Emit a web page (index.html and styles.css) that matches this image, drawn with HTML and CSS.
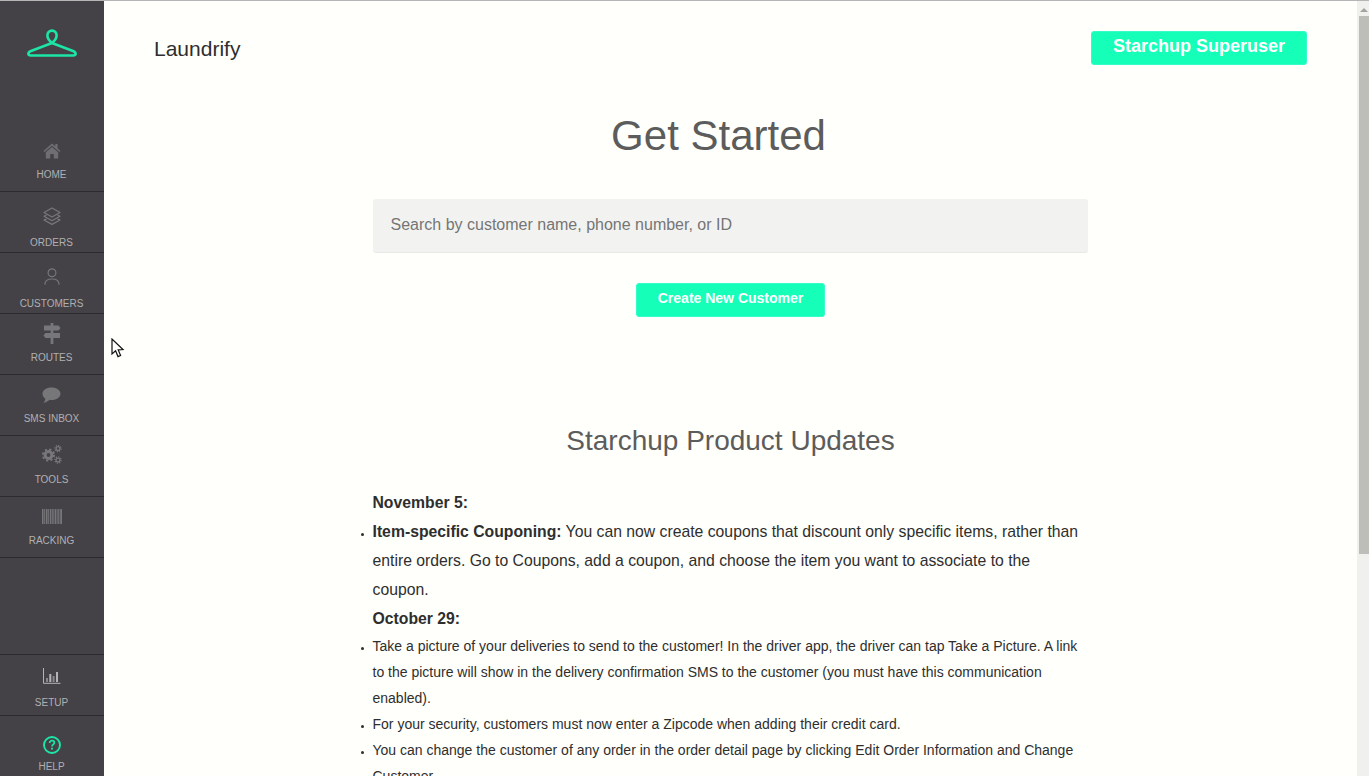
FILE: index.html

```html
<!DOCTYPE html>
<html lang="en">
<head>
  <meta charset="UTF-8" />
  <title>Laundrify</title>
  <link rel="stylesheet" href="styles.css">
</head>
<body>
  <div class="topline"></div>
  <div class="app">
    <nav class="sidebar">
      <div class="logo">
        <svg width="52" height="32" viewBox="0 0 52 32" fill="none" stroke="#1ce6a6" stroke-width="2.6" stroke-linejoin="round" stroke-linecap="round">
          <path d="M26 15 C23 12.5 21.4 10 21.4 7.5 C21.4 4.5 23.4 2.6 26 2.6 C28.6 2.6 30.6 4.5 30.6 7.5 C30.6 10 29 12.5 26 15 Z"/>
          <path d="M26 15 L5 23 C1.5 24.5 1.5 27.5 5 27.5 L47 27.5 C50.5 27.5 50.5 24.5 47 23 Z"/>
        </svg>
      </div>
      <a class="nav-item home">
        <svg class="icon" width="18" height="16" viewBox="0 0 18 16" fill="#6f6f72"><path d="M9 0.5 L0.5 8 L1.5 9 L9 2.7 L16.5 9 L17.5 8 L14.5 5.3 L14.5 1 L12.3 1 L12.3 3.3 Z"/><path d="M9 4 L2.8 9.2 L2.8 15.5 L7.2 15.5 L7.2 11 L10.8 11 L10.8 15.5 L15.2 15.5 L15.2 9.2 Z"/></svg>
        <span>HOME</span>
      </a>
      <a class="nav-item orders">
        <svg class="icon" width="18" height="18" viewBox="0 0 18 18" fill="none" stroke="#77777a" stroke-width="1.3" stroke-linejoin="round"><path d="M9 1 L17 5.5 L9 10 L1 5.5 Z"/><path d="M3.5 8 L1 9.3 L9 13.8 L17 9.3 L14.5 8"/><path d="M3.5 11.8 L1 13 L9 17.4 L17 13 L14.5 11.8"/></svg>
        <span>ORDERS</span>
      </a>
      <a class="nav-item customers">
        <svg class="icon" width="16" height="17" viewBox="0 0 16 17" fill="none" stroke="#77777a" stroke-width="1.2" stroke-linecap="round"><circle cx="8" cy="4.8" r="3.9"/><path d="M1 16.2 C1 12.2 4.5 11 8 11 C11.5 11 15 12.2 15 16.2"/></svg>
        <span>CUSTOMERS</span>
      </a>
      <a class="nav-item routes">
        <svg class="icon" width="18" height="21" viewBox="0 0 18 21" fill="#77777a"><rect x="7.6" y="0" width="2.8" height="21"/><path d="M1 2.5 L15.5 2.5 L17.5 5 L15.5 7.5 L1 7.5 Z"/><path d="M17 10 L2.5 10 L0.5 12.5 L2.5 15 L17 15 Z"/></svg>
        <span>ROUTES</span>
      </a>
      <a class="nav-item sms">
        <svg class="icon" width="19" height="17" viewBox="0 0 19 17" fill="#77777a"><path d="M9.5 0.5 C14.5 0.5 18.5 3.2 18.5 6.7 C18.5 10.2 14.5 13 9.5 13 C8.7 13 8 12.9 7.3 12.8 C5.8 14.5 3.8 15.6 1.5 16.2 C2.5 14.8 3.2 13.3 3.3 11.6 C1.6 10.4 0.5 8.7 0.5 6.7 C0.5 3.2 4.5 0.5 9.5 0.5 Z"/></svg>
        <span>SMS INBOX</span>
      </a>
      <a class="nav-item tools">
        <svg class="icon" width="20" height="19" viewBox="0 0 20 19" fill="none" stroke="#77777a"><circle cx="6.5" cy="10" r="3.4" stroke-width="3"/><circle cx="6.5" cy="10" r="5.6" stroke-width="2" stroke-dasharray="2.2 2.2"/><circle cx="16" cy="3.6" r="1.9" stroke-width="1.3"/><circle cx="16" cy="3.6" r="3.1" stroke-width="1.2" stroke-dasharray="1.2 1.2"/><circle cx="16" cy="15" r="1.9" stroke-width="1.3"/><circle cx="16" cy="15" r="3.1" stroke-width="1.2" stroke-dasharray="1.2 1.2"/></svg>
        <span>TOOLS</span>
      </a>
      <a class="nav-item racking">
        <svg class="icon" width="20" height="15" viewBox="0 0 20 15" fill="#77777a"><rect x="0" width="1.5" height="15"/><rect x="2.2" width="1" height="15"/><rect x="4" width="1.5" height="15"/><rect x="6.2" width="1" height="15"/><rect x="8" width="1" height="15"/><rect x="9.6" width="1.2" height="15"/><rect x="11.4" width="1" height="15"/><rect x="13" width="1" height="15"/><rect x="14.6" width="1" height="15"/><rect x="16.2" width="1.2" height="15"/><rect x="18.2" width="1.8" height="15"/></svg>
        <span>RACKING</span>
      </a>
      <div class="sidebar-bottom">
        <a class="nav-item setup">
          <svg class="icon" width="18" height="16" viewBox="0 0 18 16" fill="#8a8a8c"><path d="M0.5 0 V15.3 H17.5" fill="none" stroke="#b4b4b6" stroke-width="1"/><rect x="3" y="10" width="2" height="4" fill="#88888a"/><rect x="6.3" y="6" width="2" height="8" fill="#b4b4b6"/><rect x="9.6" y="8" width="2" height="6" fill="#88888a"/><rect x="13" y="4" width="2" height="10" fill="#b4b4b6"/></svg>
          <span>SETUP</span>
        </a>
        <a class="nav-item help">
          <svg class="icon" width="18" height="18" viewBox="0 0 18 18" fill="none" stroke="#1ce6a6" stroke-width="1.9"><circle cx="9" cy="9" r="8"/><path d="M6.6 7 C6.6 5.5 7.7 4.7 9 4.7 C10.4 4.7 11.4 5.5 11.4 6.8 C11.4 8.4 9 8.6 9 10.6" stroke-width="1.7"/><path d="M9 11.8 V13.6" stroke-width="1.9"/></svg>
          <span>HELP</span>
        </a>
      </div>
    </nav>

    <main class="main">
      <header class="topbar">
        <div class="brand">Laundrify</div>
        <button class="btn btn-user">Starchup Superuser</button>
      </header>
      <h1 class="title">Get Started</h1>
      <section class="content">
        <input class="search" type="text" placeholder="Search by customer name, phone number, or ID">
        <div class="create-row"><button class="btn btn-create">Create New Customer</button></div>
        <h2 class="updates-title">Starchup Product Updates</h2>
        <div class="updates">
          <p class="date">November 5:</p>
          <ul class="large">
            <li><b>Item-specific Couponing:</b> You can now create coupons that discount only specific items, rather than entire orders. Go to Coupons, add a coupon, and choose the item you want to associate to the coupon.</li>
          </ul>
          <p class="date">October 29:</p>
          <ul>
            <li>Take a picture of your deliveries to send to the customer! In the driver app, the driver can tap Take a Picture. A link to the picture will show in the delivery confirmation SMS to the customer (you must have this communication enabled).</li>
            <li>For your security, customers must now enter a Zipcode when adding their credit card.</li>
            <li>You can change the customer of any order in the order detail page by clicking Edit Order Information and Change Customer.</li>
          </ul>
        </div>
      </section>
    </main>

    <div class="scrollbar">
      <div class="scroll-up"></div>
      <div class="scroll-thumb"></div>
    </div>
  </div>

  <svg class="cursor" width="14" height="21" viewBox="0 0 14 21"><path d="M1 1 L1 16 L4.6 12.8 L7 18.6 L9.6 17.5 L7.2 11.9 L12 11.6 Z" fill="#fff" stroke="#111" stroke-width="1.2" stroke-linejoin="miter"/></svg>
</body>
</html>
```

FILE: styles.css

```css
html, body {
  margin: 0;
  height: 100%;
  overflow: hidden;
}

body {
  font-family: "Liberation Sans", Arial, sans-serif;
  background-color: #fffffb;
  color: #2e2e2e;
}

.topline {
  height: 1px;
  background: #b5b5b5;
}

.app {
  display: flex;
  height: 775px;
}

/* sidebar */
.sidebar {
  width: 104px;
  flex: none;
  background: #444247;
  display: flex;
  flex-direction: column;
  overflow: hidden;
}

.logo {
  height: 123px;
  display: flex;
  justify-content: center;
  align-items: flex-start;
  padding-top: 27px;
  box-sizing: border-box;
}

.nav-item {
  display: flex;
  flex-direction: column;
  align-items: center;
  height: 61px;
  padding-right: 1px;
  box-sizing: border-box;
  border-bottom: 1px solid #2b2a2f;
  color: #b0b0b2;
  font-size: 10px;
  line-height: 12px;
}

.nav-item span {
  display: block;
}

.icon {
  display: block;
  flex: none;
}

.home { height: 68px; padding-top: 19px; }
.home .icon { margin-bottom: 10px; }
.orders { padding-top: 15px; }
.orders .icon { margin-bottom: 12px; }
.customers { padding-top: 15px; }
.customers .icon { margin-bottom: 13px; }
.routes { padding-top: 9px; }
.routes .icon { margin-bottom: 8px; }
.sms { padding-top: 12px; }
.sms .icon { margin-bottom: 9px; }
.tools { padding-top: 9px; }
.tools .icon { margin-bottom: 10px; }
.racking { padding-top: 12px; }
.racking .icon { margin-bottom: 11px; }

.sidebar-bottom {
  margin-top: auto;
  border-top: 1px solid #2b2a2f;
}

.setup { padding-top: 13px; }
.setup .icon { margin-bottom: 13px; }
.help { padding-top: 20px; border-bottom: none; height: 60px; }
.help .icon { margin-bottom: 7px; }

/* main */
.main {
  flex: 1;
  min-width: 0;
  overflow: hidden;
}

.topbar {
  display: flex;
  justify-content: space-between;
  align-items: flex-start;
  padding: 30px 50px 0;
}

.brand {
  font-size: 21px;
  line-height: 36px;
}

.btn {
  font-family: inherit;
  font-weight: bold;
  color: #fff;
  background: #15ffb9;
  border: 1px solid #35fbc8;
  border-radius: 3px;
}

.btn-user {
  width: 216px;
  height: 34px;
  font-size: 18px;
  padding: 0 0 4px;
}

.title {
  margin: 39px 0 0;
  padding-right: 24px;
  text-align: center;
  font-size: 42px;
  line-height: 60px;
  font-weight: normal;
  color: #5c5c5c;
}

.content {
  width: 715px;
  margin: 33px 0 0 269px;
}

.search {
  display: block;
  width: 100%;
  height: 54px;
  box-sizing: border-box;
  padding: 0 18px 2px 17.5px;
  background: #f2f3f1;
  border: none;
  border-bottom: 1px solid #e8e8e6;
  border-radius: 3px;
  font-family: inherit;
  font-size: 16px;
  color: #555;
}

.search::placeholder {
  color: #757575;
  opacity: 1;
}

.create-row {
  margin-top: 30px;
  text-align: center;
}

.btn-create {
  width: 189px;
  height: 34px;
  font-size: 14px;
  padding: 0 0 4px;
}

.updates-title {
  margin: 106px 0 0;
  text-align: center;
  font-size: 28px;
  line-height: 36px;
  font-weight: normal;
  color: #5c5c5c;
}

.updates {
  margin-top: 29px;
  margin-left: -0.5px;
}

.date {
  margin: 0;
  font-size: 15.75px;
  line-height: 29px;
  font-weight: bold;
}

.updates ul {
  margin: 0;
  padding: 0;
  font-size: 14px;
  line-height: 26px;
}

.updates ul.large {
  font-size: 15.75px;
  line-height: 29px;
}

.updates li::marker {
  font-size: 9px;
}

/* browser scrollbar */
.scrollbar {
  width: 12px;
  flex: none;
  background: #f0f0ee;
  position: relative;
}

.scroll-up {
  height: 15px;
  position: relative;
}

.scroll-up::before {
  content: "";
  position: absolute;
  left: 3px;
  top: 7px;
  border-left: 4px solid transparent;
  border-right: 4px solid transparent;
  border-bottom: 4px solid #a3a3a0;
}

.scroll-thumb {
  height: 538px;
  margin-left: 2px;
  background: #bdbdb9;
}

.cursor {
  position: absolute;
  left: 111px;
  top: 338px;
}
```
